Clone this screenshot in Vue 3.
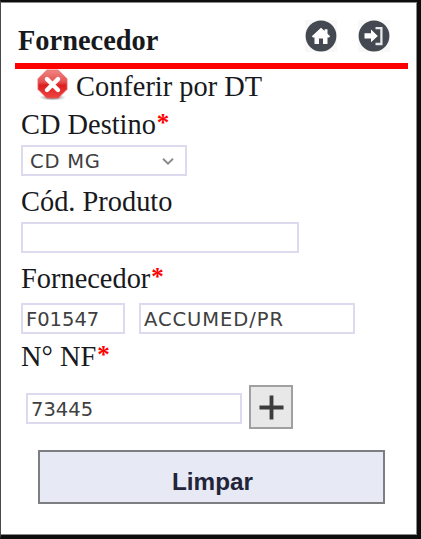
<script setup>
import { ref } from 'vue'

const product = ref('')
const supplierCode = ref('F01547')
const supplierName = ref('ACCUMED/PR')
const invoice = ref('73445')
</script>

<template>
  <main class="screen">
    <header class="header">
      <h1>Fornecedor</h1>
      <nav class="actions">
        <svg class="round" viewBox="0 0 32 32">
          <rect width="32" height="32" fill="#f8f8f8" />
          <circle cx="16" cy="16" r="15.4" fill="#434851" />
          <path d="M16 7.8 L6.8 16.2 L8 17.6 H9.5 V24 H14 V18.6 H18 V24 H22.5 V17.6 H24 L25.2 16.2 L22.5 13.7 V9.2 H19.6 V11 Z" fill="#fff" />
        </svg>
        <svg class="round" viewBox="0 0 32 32">
          <rect width="32" height="32" fill="#f8f8f8" />
          <circle cx="16" cy="16" r="15.4" fill="#434851" />
          <path d="M6.5 13.2 H13 V9.6 L19.8 16 L13 22.2 V18.6 H6.5 Z" fill="#fff" />
          <path d="M17.5 8.2 H23.4 V24 H17.5" fill="none" stroke="#e8e8ea" stroke-width="2.3" />
        </svg>
      </nav>
    </header>

    <section class="form">
      <div class="check">
        <svg class="cross" viewBox="0 0 32 33">
          <defs>
            <linearGradient id="red" x1="0" y1="0" x2="0" y2="1">
              <stop offset="0" stop-color="#ef8583" />
              <stop offset=".42" stop-color="#e65351" />
              <stop offset=".55" stop-color="#dc1f20" />
              <stop offset="1" stop-color="#ee4443" />
            </linearGradient>
            <radialGradient id="shade">
              <stop offset="0" stop-color="#333" />
              <stop offset="1" stop-color="#999" stop-opacity="0" />
            </radialGradient>
          </defs>
          <ellipse cx="16" cy="29.3" rx="14" ry="3.4" fill="url(#shade)" />
          <path d="M10.2 1 H21.8 L31 10 V21 L22 30 H10 L1 21 V10 Z" fill="url(#red)" stroke="#e26a69" stroke-width=".8" stroke-linejoin="round" />
          <path d="M10.3 10.4 L21.7 21.6 M21.7 10.4 L10.3 21.6" stroke="#fff" stroke-width="4.5" stroke-linecap="round" />
        </svg>
        <span>Conferir por DT</span>
      </div>

      <div class="label">CD Destino<b>*</b></div>
      <div class="field select">
        <span>CD MG</span>
        <svg class="chevron" viewBox="0 0 12 9"><path d="M1 1.7 L6 6.7 L11 1.7" fill="none" stroke="#8c8c8c" stroke-width="2" /></svg>
      </div>

      <div class="label">Cód. Produto</div>
      <input v-model="product" class="field product" />

      <div class="label">Fornecedor<b>*</b></div>
      <div class="supplier">
        <input v-model="supplierCode" class="field code" />
        <input v-model="supplierName" class="field name" />
      </div>

      <div class="label last">N° NF<b>*</b></div>
      <div class="invoice">
        <input v-model="invoice" class="field number" />
        <button class="add">
          <svg viewBox="0 0 26 26"><path d="M13 .5 V25.5 M.5 13 H25.5" stroke="#3c3c3c" stroke-width="4" /></svg>
        </button>
      </div>

      <button class="clear">Limpar</button>
    </section>
  </main>
</template>

<style>
body {
  margin: 0;
  background: #0d0d0d;
}
</style>

<style scoped>
* {
  box-sizing: border-box;
}
.screen {
  width: 421px;
  height: 539px;
  overflow: hidden;
  background: #fff;
  border-style: solid;
  border-color: #0d0d0d;
  border-width: 2px 4px 4px 1px;
  border-left-color: #4a4a4a;
  box-shadow: inset 0 1px #8a8a8a, inset -1px -1px #8a8a8a;
  font-family: "Liberation Serif", serif;
  font-size: 28.4px;
  line-height: 32px;
  color: #17191d;
}
.header {
  display: flex;
  justify-content: space-between;
  width: 393px;
  height: 67px;
  margin-left: 14px;
  padding: 18px 18px 0 3px;
  border-bottom: 6px solid #f00;
}
h1 {
  margin: 5px 0 0;
  font-size: 28.4px;
  line-height: 32px;
  font-weight: bold;
}
.actions {
  display: flex;
  gap: 21px;
}
.round {
  display: block;
  width: 32px;
  height: 32px;
}
.form {
  padding-left: 20px;
}
.check {
  display: flex;
  height: 38px;
  padding-left: 16px;
  gap: 8px;
  line-height: 36px;
}
.cross {
  width: 31px;
  height: 32px;
}
.label {
  height: 38px;
  line-height: 35px;
  white-space: nowrap;
}
.label b {
  display: inline-block;
  margin-left: 1px;
  font-size: 25px;
  line-height: 20px;
  vertical-align: 3px;
  color: #f00;
}
.field {
  display: block;
  height: 31px;
  padding: 1px 4px 0 3px;
  border: 2px solid #dcdaee;
  border-radius: 0;
  outline: 0;
  background: #fff;
  font-family: "DejaVu Sans", sans-serif;
  font-size: 19.5px;
  line-height: 26px;
  color: #404040;
}
.select {
  display: flex;
  align-items: center;
  justify-content: space-between;
  width: 166px;
  margin-bottom: 8px;
  padding: 2px 11px 0 7px;
  letter-spacing: 0.8px;
}
.chevron {
  width: 12px;
  height: 9px;
}
.product {
  width: 278px;
  margin-bottom: 8px;
}
.supplier {
  display: flex;
  gap: 14px;
  height: 36px;
  margin-top: 4px;
}
.label + .supplier {
  margin-top: 4px;
}
.code {
  width: 104px;
}
.name {
  width: 216px;
  letter-spacing: 0.95px;
}
.last {
  height: 46px;
}
.invoice {
  display: flex;
  align-items: center;
  gap: 7px;
  height: 44px;
  padding-left: 5px;
}
.number {
  width: 216px;
  height: 31px;
  margin-top: 3px;
}
.add {
  display: flex;
  align-items: center;
  justify-content: center;
  width: 44px;
  height: 44px;
  padding: 0;
  border: 2px solid #a0a0a0;
  background: #e8e8e8;
}
.add svg {
  width: 25px;
  height: 25px;
}
.clear {
  display: block;
  width: 347px;
  height: 54px;
  margin: 21px 0 0 17px;
  padding: 9px 0 0 2px;
  border: 2px solid #7c7e82;
  background: #e7eaf4;
  font-family: "Liberation Sans", sans-serif;
  font-size: 24.3px;
  font-weight: bold;
  line-height: 28px;
  color: #222439;
}
</style>
